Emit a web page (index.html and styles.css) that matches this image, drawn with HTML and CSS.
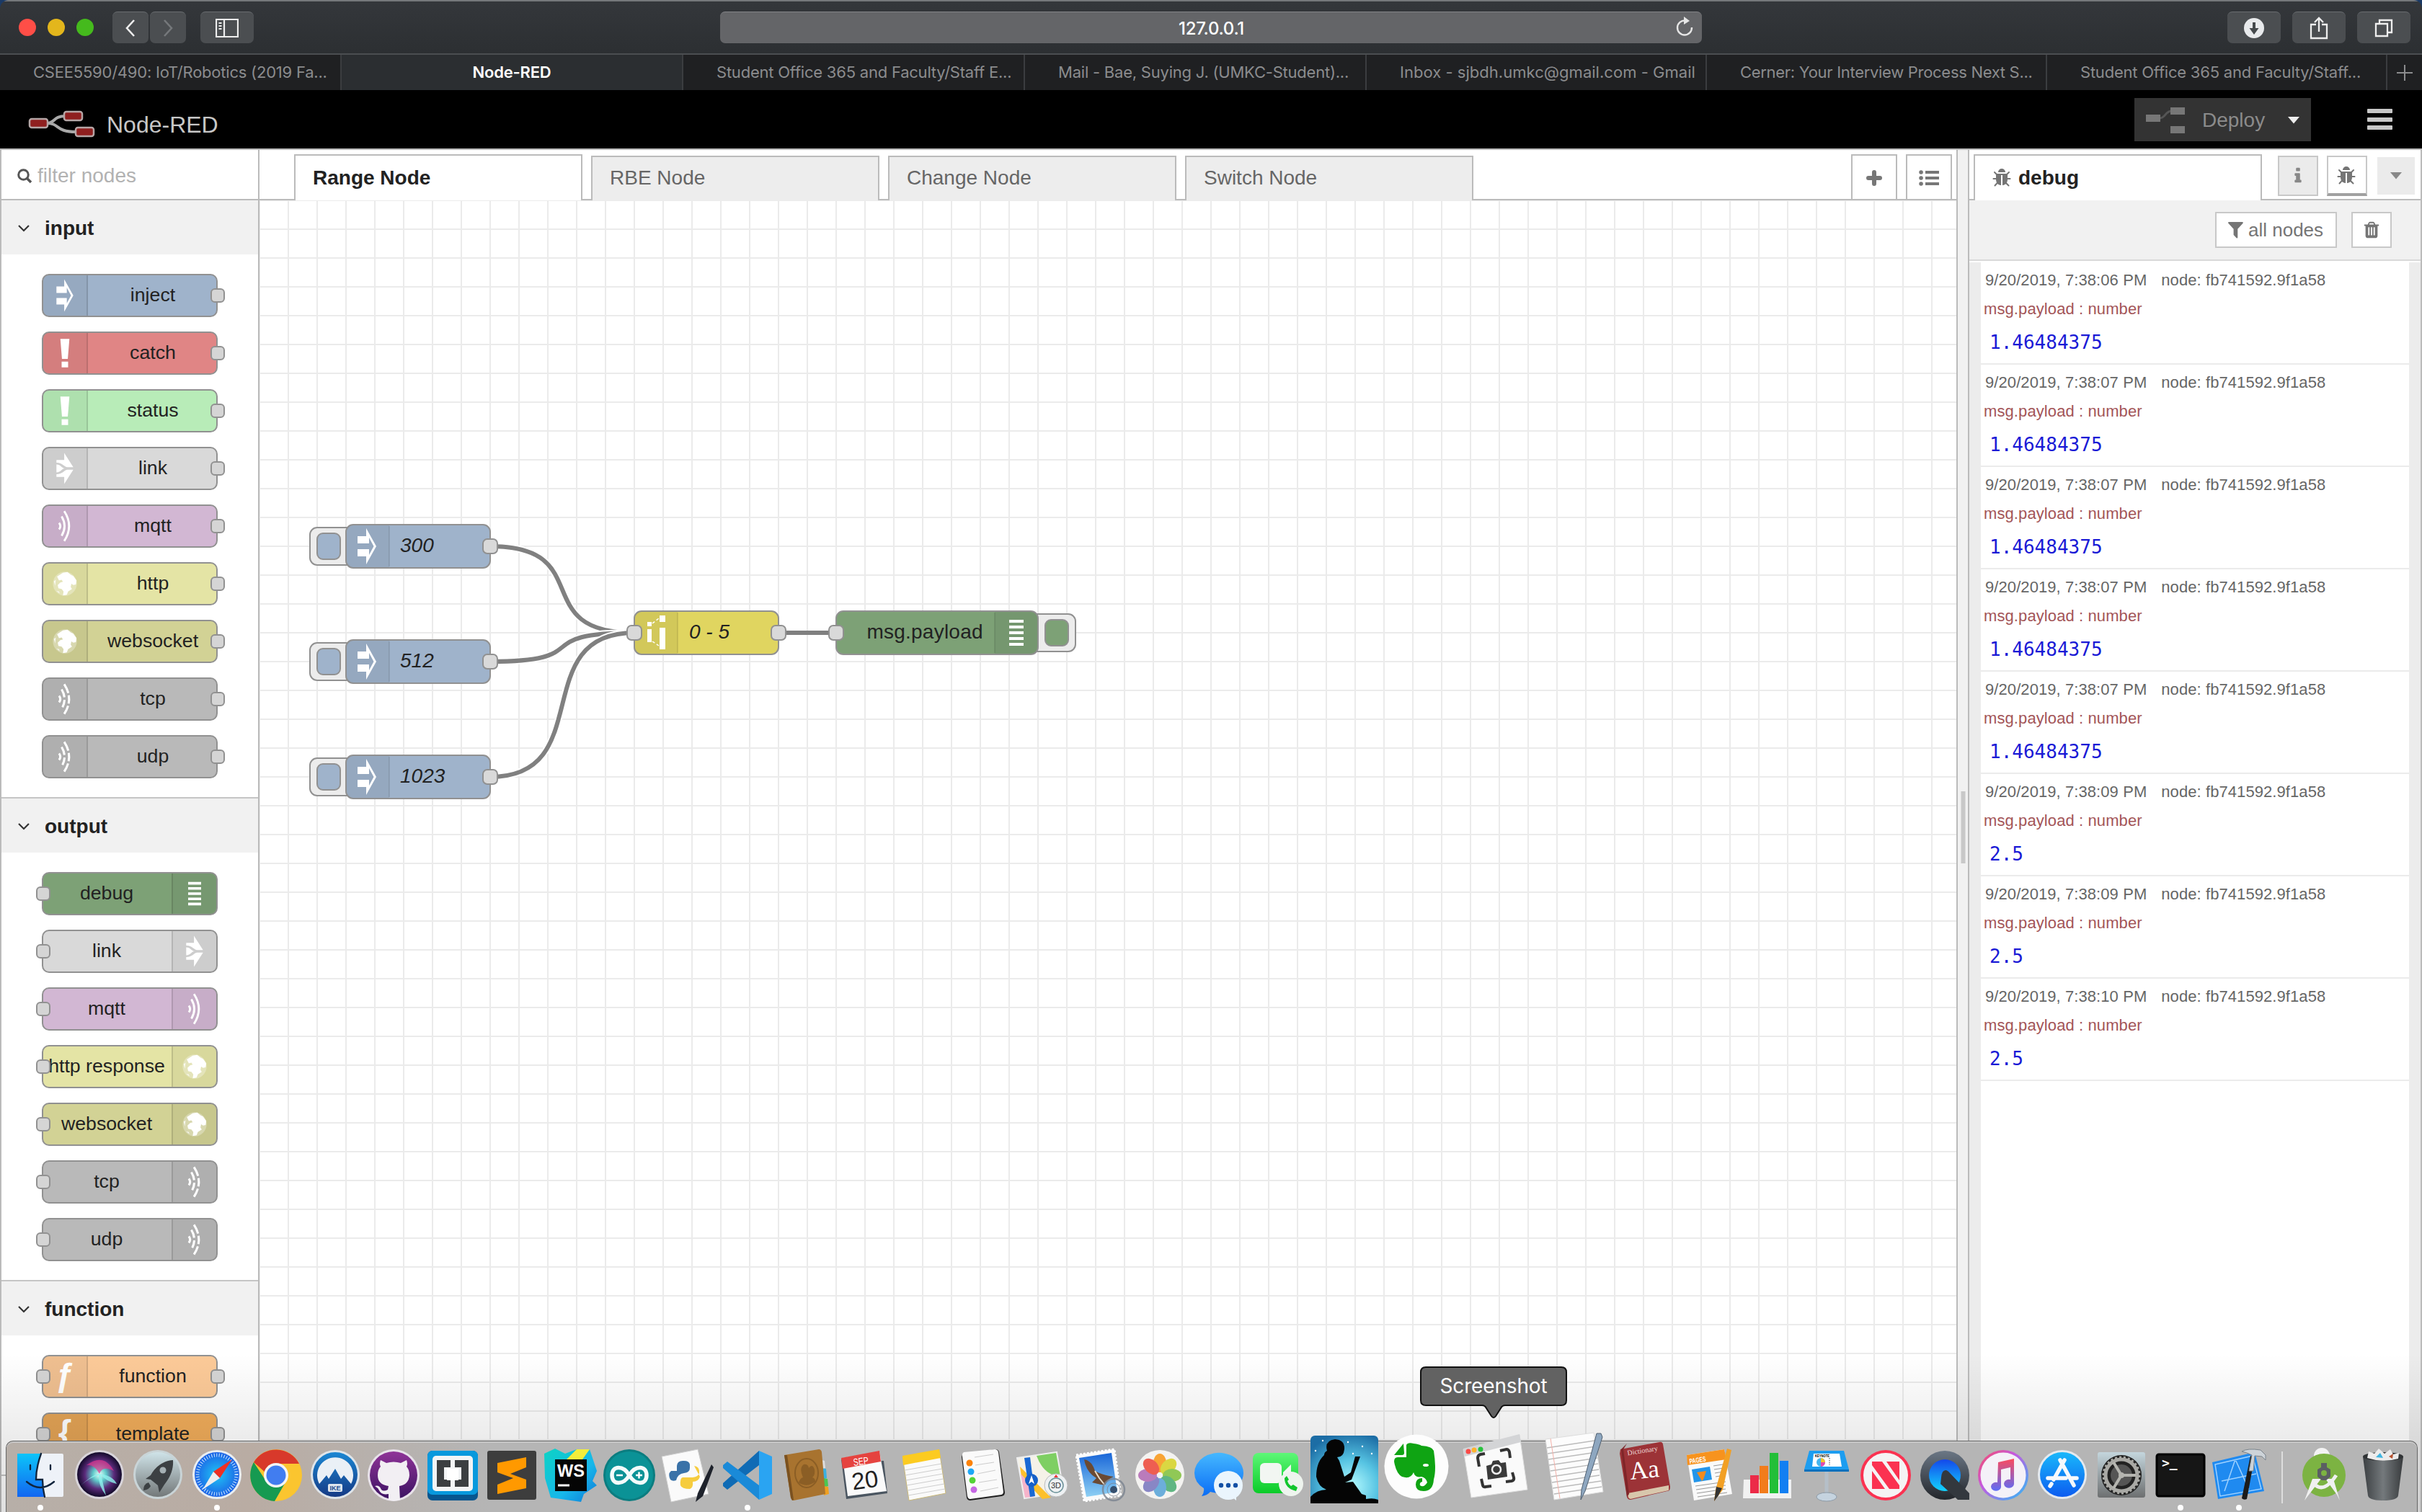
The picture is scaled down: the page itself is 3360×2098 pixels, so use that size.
FILE: index.html
```html
<!DOCTYPE html>
<html lang="en">
<head>
<meta charset="utf-8">
<title>Node-RED</title>
<link rel="stylesheet" href="styles.css">
</head>
<body>
<svg class="defs" width="0" height="0">
  <defs>
    <symbol id="i-inject" viewBox="-20 -30 40 60"><path fill="#fff" fill-rule="evenodd" d="M-13-14H-1V-25L13 0L-1 25V14H-13V4H3V12L9.500 0L3-12V-4H-13Z"/></symbol>
    <symbol id="i-bang" viewBox="-20 -30 40 60"><path fill="#fff" d="M-7-22H7L4.500 9H-4.500ZM-5 13H5V22H-5Z"/></symbol>
    <symbol id="i-link" viewBox="-20 -30 40 60"><path fill="#fff" d="M-13-13H-1V-24L13-2H4C-1-2-3-9-13-9ZM-13 13H-1V24L13 2H4C-1 2-3 9-13 9Z"/><path fill="#fff" d="M-13-6C-6-6-5 0 0 0C-5 0-6 6-13 6Z"/></symbol>
    <symbol id="i-mqtt" viewBox="-20 -30 40 60"><g fill="none" stroke="#fff" stroke-width="3.200"><path d="M-9-5Q-5 0-9 5M-5-15Q4 0-5 15M-1-23Q14 0-1 23"/></g></symbol>
    <symbol id="i-tcp" viewBox="-20 -30 40 60"><g fill="none" stroke="#fff" stroke-width="3.400"><path d="M-9-5Q-5 0-9 5"/><path stroke-dasharray="13 4 12 4" d="M-5-15Q4 0-5 15"/><path stroke-dasharray="15 3.500 13 3.500" d="M-1-23Q14 0-1 23"/></g></symbol>
    <symbol id="i-globe" viewBox="-20 -30 40 60"><circle r="18.500" fill="#fff" fill-opacity=".3"/><path fill="#fff" d="M-12-11L-3-17L4-18L9-14L13-12L18-5L17 1L13 2L10 0L9 5L11 8L5 12L3 17L-3 18L-2 12L-5 8L-10 7L-11 2L-7-2L-3-3L-5-6L-9-5Z"/><path fill="#fff" d="M-17-4L-14-6L-15 3ZM-13 11L-9 12L-8 15Z" fill-opacity=".8"/></symbol>
    <symbol id="i-debug" viewBox="-20 -30 40 60"><path fill="#fff" d="M-10-18H10V-14H-10ZM-10-10H10V-6H-10ZM-10-2H10V2H-10ZM-10 6H10V10H-10ZM-10 14H10V18H-10Z"/></symbol>
    <symbol id="i-range" viewBox="-20 -30 40 60"><path fill="#fff" d="M-12-15H-6V-9H-12ZM-12-5H-6V13H-12ZM5-24H13V-15H5ZM5-7H13V23H5Z"/><path stroke="#fff" stroke-width="1.500" stroke-dasharray="4 3" d="M-5-13L4-20M-5 12L4 18"/></symbol>
    <symbol id="i-bug" viewBox="0 0 1792 1792"><path fill="currentColor" d="M1632 960q0 26-19 45t-45 19h-224q0 171-67 290l208 209q19 19 19 45t-19 45q-18 19-45 19t-45-19l-198-197q-5 5-15 13t-42 28.500-65 36.500-82 29-97 13v-896h-128v896q-51 0-101.500-13.500t-87-33-66-39-43.500-32.500l-15-14-183 207q-20 21-48 21-24 0-43-16-19-18-20.500-44.500t15.500-46.500l202-227q-58-114-58-274h-224q-26 0-45-19t-19-45 19-45 45-19h224v-294l-173-173q-19-19-19-45t19-45 45-19 45 19l173 173h844l173-173q19-19 45-19t45 19 19 45-19 45l-173 173v294h224q26 0 45 19t19 45zm-480-576h-640q0-133 93.500-226.500t226.500-93.500 226.500 93.500 93.500 226.500z"/></symbol>
  </defs>
</svg>

<div class="window">
  <div class="toolbar">
    <div class="lights"><i class="red"></i><i class="yellow"></i><i class="green"></i></div>
    <div class="btn-pair">
      <span class="tbtn back"><svg width="16" height="26"><path d="M13 2L3 13L13 24" fill="none" stroke="#eee" stroke-width="2.600"/></svg></span>
      <span class="tbtn back"><svg width="16" height="26"><path d="M3 2L13 13L3 24" fill="none" stroke="#75787b" stroke-width="2.600"/></svg></span>
    </div>
    <span class="tbtn"><svg width="32" height="26"><path d="M1 1H31V25H1ZM12 1V25M4.500 6H8.500M4.500 10H8.500M4.500 14H8.500" fill="none" stroke="#eee" stroke-width="2.200"/></svg></span>
    <div class="address"><span class="url">127.0.0.1</span>
      <svg class="reload" width="26" height="28" viewBox="0 0 26 28"><path d="M14 5.500A10 10 0 1 0 23 15" fill="none" stroke="#e6e6e6" stroke-width="2.400"/><path d="M12 0L20 6L12 11Z" fill="#e6e6e6"/></svg>
    </div>
    <div class="actions">
      <span class="tbtn"><svg width="28" height="28"><circle cx="14" cy="14" r="14" fill="#e8eaec"/><path d="M14 6V15" stroke="#45494c" stroke-width="4"/><path d="M7.500 14H20.500L14 23Z" fill="#45494c"/></svg></span>
      <span class="tbtn"><svg width="26" height="32"><path d="M9 11H2V30H24V11H17M13 21V2M7 8L13 2L19 8" fill="none" stroke="#eee" stroke-width="2.300"/></svg></span>
      <span class="tbtn"><svg width="26" height="26"><path d="M2 7H18V24H2ZM7 7V2H24V19H18" fill="none" stroke="#eee" stroke-width="2.300"/></svg></span>
    </div>
  </div>
  <div class="tabs">
    <span class="tab">CSEE5590/490: IoT/Robotics (2019 Fa...</span>
    <span class="tab current">Node-RED</span>
    <span class="tab">Student Office 365 and Faculty/Staff E...</span>
    <span class="tab">Mail - Bae, Suying J. (UMKC-Student)...</span>
    <span class="tab loose">Inbox - sjbdh.umkc@gmail.com - Gmail</span>
    <span class="tab tight">Cerner: Your Interview Process Next S...</span>
    <span class="tab">Student Office 365 and Faculty/Staff...</span>
    <span class="newtab"><svg width="24" height="24"><path d="M12 1V23M1 12H23" stroke="#8b8c8e" stroke-width="2"/></svg></span>
  </div>

  <header class="header">
    <svg class="logo" width="94" height="38" viewBox="0 0 94 38"><path d="M26 18C38 18 34 8 52 8M26 18C44 18 38 30 66 30" fill="none" stroke="#a9a9a9" stroke-width="4"/><g fill="#8f1f1f" stroke="#b5a5a5" stroke-width="2.500"><rect x="2" y="12" width="25" height="12" rx="3"/><rect x="50" y="2" width="25" height="12" rx="3"/><rect x="66" y="24" width="25" height="12" rx="3"/></g></svg>
    <span class="brand">Node-RED</span>
    <div class="deploy">
      <svg width="54" height="38" viewBox="0 0 54 38"><path d="M19 16C28 16 26 6 36 6" fill="none" stroke="#555" stroke-width="3"/><path fill="#777" d="M0 11H20V21H0ZM34 1H54V11H34ZM34 27H54V37H34Z"/></svg>
      <span class="deploy-label">Deploy</span>
      <svg width="16" height="10"><path d="M0 0H16L8 9.500Z" fill="#eee"/></svg>
    </div>
    <div class="burger"><i></i><i></i><i></i></div>
  </header>

  <main class="main">
    <aside class="palette">
      <div class="search"><svg width="21" height="21"><circle cx="8.500" cy="8.500" r="6.800" fill="none" stroke="#555" stroke-width="3"/><path d="M13.500 13.500L19 19" stroke="#555" stroke-width="3.500"/></svg><span>filter nodes</span></div>
      <section class="category">
        <h3><svg width="18" height="12"><path d="M2 2L9 9L16 2" fill="none" stroke="#333" stroke-width="2.200"/></svg>input</h3>
        <div class="nodes">
          <div class="node inject"><svg class="icon"><use href="#i-inject"/></svg><span>inject</span><i class="port out"></i></div>
          <div class="node catch"><svg class="icon"><use href="#i-bang"/></svg><span>catch</span><i class="port out"></i></div>
          <div class="node status"><svg class="icon"><use href="#i-bang"/></svg><span>status</span><i class="port out"></i></div>
          <div class="node link"><svg class="icon"><use href="#i-link"/></svg><span>link</span><i class="port out"></i></div>
          <div class="node mqtt"><svg class="icon"><use href="#i-mqtt"/></svg><span>mqtt</span><i class="port out"></i></div>
          <div class="node http"><svg class="icon"><use href="#i-globe"/></svg><span>http</span><i class="port out"></i></div>
          <div class="node websocket"><svg class="icon"><use href="#i-globe"/></svg><span>websocket</span><i class="port out"></i></div>
          <div class="node net"><svg class="icon"><use href="#i-tcp"/></svg><span>tcp</span><i class="port out"></i></div>
          <div class="node net"><svg class="icon"><use href="#i-tcp"/></svg><span>udp</span><i class="port out"></i></div>
        </div>
      </section>
      <section class="category">
        <h3><svg width="18" height="12"><path d="M2 2L9 9L16 2" fill="none" stroke="#333" stroke-width="2.200"/></svg>output</h3>
        <div class="nodes">
          <div class="node debug right"><svg class="icon"><use href="#i-debug"/></svg><span>debug</span><i class="port in"></i></div>
          <div class="node link right"><svg class="icon"><use href="#i-link"/></svg><span>link</span><i class="port in"></i></div>
          <div class="node mqtt right"><svg class="icon"><use href="#i-mqtt"/></svg><span>mqtt</span><i class="port in"></i></div>
          <div class="node http right"><svg class="icon"><use href="#i-globe"/></svg><span>http response</span><i class="port in"></i></div>
          <div class="node websocket right"><svg class="icon"><use href="#i-globe"/></svg><span>websocket</span><i class="port in"></i></div>
          <div class="node net right"><svg class="icon"><use href="#i-tcp"/></svg><span>tcp</span><i class="port in"></i></div>
          <div class="node net right"><svg class="icon"><use href="#i-tcp"/></svg><span>udp</span><i class="port in"></i></div>
        </div>
      </section>
      <section class="category">
        <h3><svg width="18" height="12"><path d="M2 2L9 9L16 2" fill="none" stroke="#333" stroke-width="2.200"/></svg>function</h3>
        <div class="nodes">
          <div class="node func"><b class="icon glyph fn">ƒ</b><span>function</span><i class="port in"></i><i class="port out"></i></div>
          <div class="node template"><b class="icon glyph">{</b><span>template</span><i class="port in"></i><i class="port out"></i></div>
        </div>
      </section>
    </aside>

    <section class="workspace">
      <div class="flow-tabs">
        <span class="ftab active">Range Node</span><span class="ftab">RBE Node</span><span class="ftab">Change Node</span><span class="ftab">Switch Node</span>
        <span class="fbtn first"><svg width="24" height="24"><path d="M12 4V20M4 12H20" stroke="#777" stroke-width="6" stroke-linecap="round"/></svg></span>
        <span class="fbtn"><svg width="28" height="24"><path d="M9 4H28M9 12H28M9 20H28" stroke="#777" stroke-width="4"/><path d="M3 4H3.100M3 12H3.100M3 20H3.100" stroke="#777" stroke-width="5.500" stroke-linecap="round"/></svg></span>
      </div>
      <svg class="canvas" width="2354" height="1820" viewBox="360 278 2354 1820">
        <g fill="none" class="wires">
          <path class="halo" d="M680 758C830 758 730 878 880 878"/><path d="M680 758C830 758 730 878 880 878"/>
          <path class="halo" d="M680 918C830 918 730 878 880 878"/><path d="M680 918C830 918 730 878 880 878"/>
          <path class="halo" d="M680 1078C830 1078 730 878 880 878"/><path d="M680 1078C830 1078 730 878 880 878"/>
          <path d="M1080 878H1160"/>
        </g>
        <g class="flow-node">
          <rect class="tray" x="430" y="732" width="64" height="52" rx="10"/><rect class="blue" x="440" y="740" width="32" height="36" rx="8"/>
          <rect class="blue" x="480" y="728" width="200" height="60" rx="10"/><path class="shade" d="M490 729H540V787H490Q481 787 481 777V739Q481 729 490 729Z"/><path class="rule" d="M540 730V786"/>
          <use href="#i-inject" x="489" y="728" width="40" height="60"/><rect class="plug" x="670" y="748" width="20" height="20" rx="6"/>
          <text class="it" x="555" y="766">300</text>
        </g>
        <g class="flow-node" transform="translate(0 160)">
          <rect class="tray" x="430" y="732" width="64" height="52" rx="10"/><rect class="blue" x="440" y="740" width="32" height="36" rx="8"/>
          <rect class="blue" x="480" y="728" width="200" height="60" rx="10"/><path class="shade" d="M490 729H540V787H490Q481 787 481 777V739Q481 729 490 729Z"/><path class="rule" d="M540 730V786"/>
          <use href="#i-inject" x="489" y="728" width="40" height="60"/><rect class="plug" x="670" y="748" width="20" height="20" rx="6"/>
          <text class="it" x="555" y="766">512</text>
        </g>
        <g class="flow-node" transform="translate(0 320)">
          <rect class="tray" x="430" y="732" width="64" height="52" rx="10"/><rect class="blue" x="440" y="740" width="32" height="36" rx="8"/>
          <rect class="blue" x="480" y="728" width="200" height="60" rx="10"/><path class="shade" d="M490 729H540V787H490Q481 787 481 777V739Q481 729 490 729Z"/><path class="rule" d="M540 730V786"/>
          <use href="#i-inject" x="489" y="728" width="40" height="60"/><rect class="plug" x="670" y="748" width="20" height="20" rx="6"/>
          <text class="it" x="555" y="766">1023</text>
        </g>
        <g class="flow-node">
          <rect class="yellow" x="880" y="848" width="200" height="60" rx="10"/><path class="shade" d="M890 849H940V907H890Q881 907 881 897V859Q881 849 890 849Z"/><path class="rule" d="M940 850V906"/>
          <use href="#i-range" x="890" y="848" width="40" height="60"/>
          <rect class="plug" x="870" y="868" width="20" height="20" rx="6"/><rect class="plug" x="1070" y="868" width="20" height="20" rx="6"/>
          <text class="it" x="956" y="886">0 - 5</text>
        </g>
        <g class="flow-node">
          <rect class="tray" x="1428" y="852" width="64" height="52" rx="10"/><rect class="green" x="1450" y="860" width="32" height="36" rx="8"/>
          <rect class="green" x="1160" y="848" width="280" height="60" rx="10"/><path class="shade" d="M1430 849H1380V907H1430Q1439 907 1439 897V859Q1439 849 1430 849Z"/><path class="rule" d="M1380 850V906"/>
          <use href="#i-debug" x="1390" y="848" width="40" height="60"/>
          <rect class="plug" x="1150" y="868" width="20" height="20" rx="6"/>
          <text x="1202.500" y="886" textLength="161" lengthAdjust="spacing">msg.payload</text>
        </g>
      </svg>
    </section>

    <div class="separator"><i></i></div>

    <aside class="sidebar">
      <div class="side-tabs">
        <span class="ftab active"><svg width="28" height="28"><use href="#i-bug"/></svg>debug</span>
        <span class="sbtn grey"><svg width="26" height="26" viewBox="0 0 1792 1792"><path fill="currentColor" d="M1216 1344v128q0 26-19 45t-45 19h-512q-26 0-45-19t-19-45v-128q0-26 19-45t45-19h64v-384h-64q-26 0-45-19t-19-45v-128q0-26 19-45t45-19h384q26 0 45 19t19 45v576h64q26 0 45 19t19 45zm-128-1152v192q0 26-19 45t-45 19h-256q-26 0-45-19t-19-45v-192q0-26 19-45t45-19h256q26 0 45 19t19 45z"/></svg></span>
        <span class="sbtn selected"><svg width="28" height="28"><use href="#i-bug"/></svg></span>
        <span class="sbtn drop"><svg width="16" height="10"><path d="M0 0H16L8 9.500Z" fill="#888"/></svg></span>
      </div>
      <div class="side-tools">
        <span class="tool"><svg width="21" height="24" viewBox="190 190 1420 1500" preserveAspectRatio="none"><path fill="currentColor" d="M1595 295q17 41-14 70l-493 493v742q0 42-39 59-13 5-25 5-27 0-45-19l-256-256q-19-19-19-45v-486l-493-493q-31-29-14-70 17-39 59-39h1280q42 0 59 39z"/></svg>all nodes</span>
        <span class="tool bin"><svg width="26" height="26" viewBox="0 0 1792 1792"><path fill="currentColor" d="M704 1376v-704q0-14-9-23t-23-9h-64q-14 0-23 9t-9 23v704q0 14 9 23t23 9h64q14 0 23-9t9-23zm256 0v-704q0-14-9-23t-23-9h-64q-14 0-23 9t-9 23v704q0 14 9 23t23 9h64q14 0 23-9t9-23zm256 0v-704q0-14-9-23t-23-9h-64q-14 0-23 9t-9 23v704q0 14 9 23t23 9h64q14 0 23-9t9-23zm-544-992h448l-48-117q-7-9-17-11h-317q-10 2-17 11zm928 32v64q0 14-9 23t-23 9h-96v948q0 83-47 143.500t-113 60.500h-832q-66 0-113-58.500t-47-141.500v-952h-96q-14 0-23-9t-9-23v-64q0-14 9-23t23-9h309l70-167q15-37 54-63t79-26h320q40 0 79 26t54 63l70 167h309q14 0 23 9t9 23z"/></svg></span>
      </div>
      <div class="log">
        <div class="msg"><p class="meta"><span>9/20/2019, 7:38:06 PM</span><span>node: fb741592.9f1a58</span></p><p class="topic">msg.payload : number</p><p class="value">1.46484375</p></div>
        <div class="msg"><p class="meta"><span>9/20/2019, 7:38:07 PM</span><span>node: fb741592.9f1a58</span></p><p class="topic">msg.payload : number</p><p class="value">1.46484375</p></div>
        <div class="msg"><p class="meta"><span>9/20/2019, 7:38:07 PM</span><span>node: fb741592.9f1a58</span></p><p class="topic">msg.payload : number</p><p class="value">1.46484375</p></div>
        <div class="msg"><p class="meta"><span>9/20/2019, 7:38:07 PM</span><span>node: fb741592.9f1a58</span></p><p class="topic">msg.payload : number</p><p class="value">1.46484375</p></div>
        <div class="msg"><p class="meta"><span>9/20/2019, 7:38:07 PM</span><span>node: fb741592.9f1a58</span></p><p class="topic">msg.payload : number</p><p class="value">1.46484375</p></div>
        <div class="msg"><p class="meta"><span>9/20/2019, 7:38:09 PM</span><span>node: fb741592.9f1a58</span></p><p class="topic">msg.payload : number</p><p class="value">2.5</p></div>
        <div class="msg"><p class="meta"><span>9/20/2019, 7:38:09 PM</span><span>node: fb741592.9f1a58</span></p><p class="topic">msg.payload : number</p><p class="value">2.5</p></div>
        <div class="msg"><p class="meta"><span>9/20/2019, 7:38:10 PM</span><span>node: fb741592.9f1a58</span></p><p class="topic">msg.payload : number</p><p class="value">2.5</p></div>
      </div>
    </aside>
  </main>
</div>

<div class="dock-shadow"></div>
<div class="dock">
  <svg width="0" height="0" class="defs"><defs>
    <linearGradient id="g-finder" x2="0" y2="1"><stop stop-color="#0cc4f9"/><stop offset="1" stop-color="#1266f1"/></linearGradient>
    <radialGradient id="g-siri"><stop stop-color="#e8fff8"/><stop offset=".3" stop-color="#5fc9c9"/><stop offset=".65" stop-color="#5a2a7a"/><stop offset="1" stop-color="#120a2a"/></radialGradient>
    <linearGradient id="g-rocket" x2="0" y2="1"><stop stop-color="#cfe3e8"/><stop offset="1" stop-color="#737879"/></linearGradient>
    <radialGradient id="g-safari"><stop stop-color="#1fc6f5"/><stop offset="1" stop-color="#1c63e6"/></radialGradient>
    <linearGradient id="g-nord" x2="0" y2="1"><stop stop-color="#1b87d3"/><stop offset="1" stop-color="#153a85"/></linearGradient>
    <linearGradient id="g-git" x2="0" y2="1"><stop stop-color="#8f3398"/><stop offset="1" stop-color="#3d1363"/></linearGradient>
    <linearGradient id="g-mail" x2="0" y2="1"><stop stop-color="#1966d8"/><stop offset="1" stop-color="#8ed0f4"/></linearGradient>
    <linearGradient id="g-msg" x2="0" y2="1"><stop stop-color="#45b8ff"/><stop offset="1" stop-color="#0b6df5"/></linearGradient>
    <linearGradient id="g-ft" x2="0" y2="1"><stop stop-color="#5df777"/><stop offset="1" stop-color="#0acb28"/></linearGradient>
    <radialGradient id="g-kindle" cx=".6" cy=".75" r=".8"><stop stop-color="#b5fbff"/><stop offset=".5" stop-color="#56c3e2"/><stop offset="1" stop-color="#1c6da5"/></radialGradient>
    <linearGradient id="g-qt" x2="0" y2="1"><stop stop-color="#6b7785"/><stop offset="1" stop-color="#23262b"/></linearGradient>
    <linearGradient id="g-qti" x2="0" y2="1"><stop stop-color="#1447ea"/><stop offset="1" stop-color="#12d4ff"/></linearGradient>
    <linearGradient id="g-it" x1="0" x2="1" y2="1"><stop stop-color="#fb4a5e"/><stop offset=".4" stop-color="#c45ae0"/><stop offset="1" stop-color="#27c0f7"/></linearGradient>
    <linearGradient id="g-note" x2="0" y2="1"><stop stop-color="#fb4a5e"/><stop offset="1" stop-color="#5d6cf7"/></linearGradient>
    <linearGradient id="g-as" x2="0" y2="1"><stop stop-color="#19b8fb"/><stop offset="1" stop-color="#0c5cf0"/></linearGradient>
    <linearGradient id="g-bin" x2="1" y2="0"><stop stop-color="#3b3f42"/><stop offset=".5" stop-color="#74797c"/><stop offset="1" stop-color="#383b3d"/></linearGradient>
    <linearGradient id="g-pref" x2="0" y2="1"><stop stop-color="#c4d6dd"/><stop offset="1" stop-color="#6d6f70"/></linearGradient>
    <linearGradient id="g-ws" x2="1" y2="1"><stop stop-color="#0cd3c4"/><stop offset=".6" stop-color="#17b7ea"/><stop offset="1" stop-color="#0d78d8"/></linearGradient>
  </defs></svg>

  <div class="slot running"><svg viewBox="-40 -47 80 98"><rect x="-32" y="-30" width="64" height="60" rx="2" fill="#eef2f8"/><path d="M-32-30H1C-4-16-6-4-6 6H3C3 14 4 22 6 30H-32Z" fill="url(#g-finder)"/><path d="M1-30C-4-16-6-4-6 6H3C3 14 4 22 6 30M-14-14V-8M14-14V-8M-19 9Q0 25 19 9" fill="none" stroke="#10243c" stroke-width="2.300" stroke-linecap="round"/></svg></div>
  <div class="slot"><svg viewBox="-40 -47 80 98"><circle r="34" cy="-1" fill="#d8d4da"/><circle r="31" cy="-1" fill="url(#g-siri)"/><path d="M-18-14Q6-32 20-6Q4-14 0-2Q-8-16-18-14Z" fill="#e2358f" opacity=".7"/><path d="M-26 14Q-8-2 0-2Q18 0 24 12Q8 8 2-1Q6 16 9 28Q-2 14-1 0Q-12 2-26 14Z" fill="#8ff2ee" opacity=".8"/></svg></div>
  <div class="slot"><svg viewBox="-40 -47 80 98"><circle r="34" cy="-1" fill="#c9d4d7"/><circle r="31" cy="-1" fill="url(#g-rocket)"/><path d="M21-21C6-20-5-10-10 0L-17 5L-10 6L0 14L2 24L9 13C17 3 22-8 21-21Z" fill="#3c4043"/><circle cx="7" cy="-7" r="4.500" fill="#a5b0b4"/><path d="M-13 10Q-20 12-20 21Q-12 20-10 15Z" fill="#3c4043"/></svg></div>
  <div class="slot running"><svg viewBox="-40 -47 80 98"><circle r="34" cy="-1" fill="#e9eef2"/><circle r="31" cy="-1" fill="url(#g-safari)"/><circle r="27" cy="-1" fill="none" stroke="#cfe8ff" stroke-width="5" stroke-dasharray="1 2.500"/><path d="M21-22L4 4L-5-5Z" fill="#ee3024"/><path d="M-20 20L-5-5L4 4Z" fill="#eee"/></svg></div>
  <div class="slot"><svg viewBox="-40 -47 80 98"><circle r="36" fill="#fbc52f"/><path d="M-31-18A36 36 0 0 1 32-16H0A16 16 0 0 0-15-4Z" fill="#d8392b"/><path d="M-31-18A36 36 0 0 0-2 36L14 8A16 16 0 0 1-14 8Z" fill="#169a51"/><circle r="17" fill="#f4f4f4"/><circle r="13.500" fill="#417df0"/></svg></div>
  <div class="slot"><svg viewBox="-40 -47 80 98"><circle r="34" cy="-1" fill="#dfe5ea"/><circle r="31" cy="-1" fill="url(#g-nord)"/><path d="M-22 12A25 25 0 1 1 22 12L12 0L8 5L0-9L-9 5L-12 0Z" fill="#eaf0f6"/><rect x="-10" y="12" width="20" height="11" rx="2" fill="#dfe6ee"/><text y="21" text-anchor="middle" font-size="9" font-weight="700" fill="#1d4b8f">IKE</text></svg></div>
  <div class="slot"><svg viewBox="-40 -47 80 98"><circle r="36" fill="#e8e2ea"/><circle r="33" fill="url(#g-git)"/><path d="M-18-21L-10-17Q0-20 10-17L18-21Q20-16 18-12Q22-8 22 0Q21 13 8 15L9 34Q0 37-7 34V26Q-17 28-20 21Q-22 17-26 15Q-20 13-17 20Q-14 23-8 20L-7 15Q-22 13-22 0Q-22-8-18-12Q-20-16-18-21Z" fill="#f2eff3"/></svg></div>
  <div class="slot"><svg viewBox="-40 -47 80 98"><rect x="-35" y="-34" width="70" height="69" rx="7" fill="#07568f"/><rect x="-35" y="-34" width="70" height="61" rx="7" fill="#0899dd"/><rect x="-28" y="-27" width="56" height="49" rx="5" fill="#f3f5f6"/><path d="M-22-21H-3V-11H-12V6H-3V16H-22ZM22-21H3V-11H12V6H3V16H22Z" fill="#3c3f41"/><rect x="-8" y="-9" width="16" height="16" fill="#fff"/></svg></div>
  <div class="slot"><svg viewBox="-40 -47 80 98"><rect x="-34" y="-34" width="68" height="68" rx="3" fill="#3d3d3d"/><path d="M20-25V-11L-2-2L20 6V18L-20 26V13L2 4L-20-4V-17Z" fill="#f90"/></svg></div>
  <div class="slot"><svg viewBox="-40 -47 80 98"><path d="M-37-30L-22-37L-8-30L8-36L26-36L36-6L30 8L36 14L18 26L14 37L-28 31L-36 4Z" fill="url(#g-ws)"/><path d="M8-36L26-36L16-22L-6-22Z" fill="#f3ee3a"/><rect x="-22" y="-22" width="44" height="44" fill="#050505"/><text x="-19" y="2" font-size="23" font-weight="700" fill="#fff" textLength="38" lengthAdjust="spacingAndGlyphs">WS</text><path d="M-18 14H-2" stroke="#fff" stroke-width="3"/></svg></div>
  <div class="slot"><svg viewBox="-40 -47 80 98"><circle r="36" fill="#0b7d80"/><circle r="33" fill="#0b9296"/><g fill="none" stroke="#f3fbfb" stroke-width="5.500"><path d="M0 0C-8-14-24-14-24 0S-8 14 0 0S24-14 24 0S8 14 0 0Z"/></g><path d="M-18 0H-9M9 0H18M13.500-4.500V4.500" stroke="#fff" stroke-width="2.500"/></svg></div>
  <div class="slot"><svg viewBox="-40 -47 80 98"><path d="M-37-26L13-36L28 26L-24 37Z" fill="#fafafa" stroke="#ccc"/><path d="M-6-20Q-16-21-16-12V-6H-24Q-29-2-25 6Q-22 9-17 7Q-15-2-6-3Q2-4 2-10V-15Q1-20-6-20Z" fill="#3a72a8"/><path d="M8-13Q16-12 15-3Q14 2 6 3H-8Q-12 4-11 14Q-9 19 2 19Q7 17 6 9Q14 9 16 2Z" fill="#f6cc3e"/><path d="M32-15L13 25L10 37L20 29L35-11Z" fill="#1e222b"/></svg></div>
  <div class="slot running"><svg viewBox="-40 -47 80 98"><path d="M16-34L34-26V26L16 34Z" fill="#2aa4f2"/><path d="M16-34V-14L-28 20L-34 15V11Z" fill="#0f6bb5"/><path d="M16 34V14L-28-19L-34-14V-10Z" fill="#1a8ad8"/></svg></div>
  <div class="slot"><svg viewBox="-40 -47 80 98"><path d="M18-22L25-20L26-10L20-8Z" fill="#ddd"/><path d="M20-10L27-9L28 4L22 6Z" fill="#3bb0e0"/><path d="M22 4L29 5L30 15L23 17Z" fill="#4cc552"/><path d="M23 15L30 16L31 26L24 28Z" fill="#f0a020"/><path d="M-31-28L17-36Q20-36 21-32L26 26L-18 35Q-21 35-22 31Z" fill="#a8732f"/><path d="M-31-28L-22 31L-20 35L-18 34L-27-28Z" fill="#7a5120"/><ellipse cy="-3" rx="16" ry="20" fill="none" stroke="#8b5e25" stroke-width="2"/><path d="M-11 10Q-9 4-5 3Q-11-10-4-15Q2-16 3-10Q8-17 11-8Q12 0 8 3Q12 4 12 9Q0 18-11 10Z" fill="#8b5e25"/></svg></div>
  <div class="slot"><svg viewBox="-40 -47 80 98"><path d="M-33-22L-26 33L31 25L26-20Z" fill="#4a5560"/><path d="M-31-24L20-33L30 22L-24 29Z" fill="#fafafa"/><path d="M-33-24L20-34L22-19L-31-9Z" fill="#e5433f"/><text transform="rotate(-8)" x="-3" y="-15" text-anchor="middle" font-size="14" fill="#fff" textLength="21" lengthAdjust="spacingAndGlyphs">SEP</text><text transform="rotate(-8)" x="-1" y="18" text-anchor="middle" font-size="33" fill="#222">20</text></svg></div>
  <div class="slot"><svg viewBox="-40 -47 80 98"><path d="M-30-26L21-35L30 25L-21 35Z" fill="#fafafa" stroke="#c9b878"/><path d="M-30-27L21-36L23-24L-29-14Z" fill="#fccb20"/><path d="M-27-7L24-16M-26 0L25-9M-25 7L26-2M-24 14L27 5M-23 21L28 12M-22 28L29 19" stroke="#ccc"/></svg></div>
  <div class="slot"><svg viewBox="-40 -47 80 98"><path d="M-27-30L17-36Q21-36 22-32L30 24Q30 28 26 29L-18 35Q-22 35-23 31L-30-25Q-30-29-27-30Z" fill="#222"/><path d="M-27-32L16-36Q20-36 21-32L28 23Q28 26 25 27L-18 33Q-21 33-22 29L-29-26Q-30-30-27-32Z" fill="#fafafa"/><path d="M-12-25L14-29M-11-14L15-18M-8-2L17-7M-6 10L19 6M-4 22L21 17" stroke="#ccc"/><circle cx="-19" cy="-17" r="4.500" fill="#fd8208"/><circle cx="-17" cy="-5" r="4.500" fill="#1ba7f7"/><circle cx="-15" cy="7" r="4.500" fill="#53d337"/><circle cx="-13" cy="20" r="4.500" fill="#c667e4"/></svg></div>
  <div class="slot"><svg viewBox="-40 -47 80 98"><path d="M-35-24L20-32L30 24L-25 32Z" fill="#f5f2e8" stroke="#eee" stroke-width="2"/><path d="M-8-27L19-31L25 2Q2 0-8-27Z" fill="#7ecf63"/><path d="M-31-12L12 31L0 33L-29 2Z" fill="#fcc02d"/><path d="M-30-2L-15 14L-12 30L-24 31Z" fill="#f5b3ca"/><path d="M-25-24L-17-25L-10 29L-17 30Z" fill="#1a69d4"/><circle cx="-15" cy="7" r="9" fill="#1560c8"/><path d="M-15 0L-11 12L-15 9L-19 12Z" fill="#fff"/><circle cx="19" cy="14" r="16" fill="#eef1f3" stroke="#bbb"/><circle cx="19" cy="14" r="10" fill="none" stroke="#6b9299" stroke-width="1.500"/><path d="M19-1L22 3H16Z" fill="#e33"/><text x="19" y="18" text-anchor="middle" font-size="11" fill="#333">3D</text></svg></div>
  <div class="slot"><svg viewBox="-40 -47 80 98"><path d="M-34-28L19-36L28 28L-23 36Z" fill="#fafafa" stroke="#fff" stroke-width="3" stroke-dasharray="3 2"/><path d="M-30-24L15-31L23 23L-20 30Z" fill="url(#g-mail)"/><path d="M-23-22Q-12-20-8-6Q2 0 18 2Q8 6 6 14L-4 12L-12 10L-6 4Q-20-4-23-22Z" fill="#6b4a33"/><path d="M-8-6L-2 4L6 14" stroke="#e8dcc8" stroke-width="2" fill="none"/><circle cx="18" cy="20" r="15" fill="none" stroke="#7b8390" stroke-width="2.500" opacity=".8"/><circle cx="18" cy="20" r="9" fill="none" stroke="#7b8390" opacity=".8"/><circle cx="18" cy="20" r="5" fill="#36506f"/></svg></div>
  <div class="slot"><svg viewBox="-40 -47 80 98"><circle r="34" cy="-1" fill="#f4f3f1"/><g opacity=".88"><ellipse cy="-17" rx="9" ry="13" fill="#f99a1c"/><ellipse cy="-17" rx="9" ry="13" fill="#d7d42a" transform="rotate(45)"/><ellipse cy="-17" rx="9" ry="13" fill="#83c341" transform="rotate(90)"/><ellipse cy="-17" rx="9" ry="13" fill="#4cae74" transform="rotate(135)"/><ellipse cy="-17" rx="9" ry="13" fill="#5aa5d8" transform="rotate(180)"/><ellipse cy="-17" rx="9" ry="13" fill="#7a78c0" transform="rotate(225)"/><ellipse cy="-17" rx="9" ry="13" fill="#b36bb4" transform="rotate(270)"/><ellipse cy="-17" rx="9" ry="13" fill="#ee4a3c" transform="rotate(315)"/></g></svg></div>
  <div class="slot"><svg viewBox="-40 -47 80 98"><path d="M-34-3A34 28 0 1 1 30 10Q10 30-12 23Q-16 28-24 29Q-20 24-21 18Q-34 10-34-3Z" fill="url(#g-msg)"/><circle cx="13" cy="14" r="20" fill="#eaf5fd"/><path d="M18 30L24 35V26Z" fill="#eaf5fd"/><g fill="#1350a5"><circle cx="3" cy="14" r="3.200"/><circle cx="13" cy="14" r="3.200"/><circle cx="23" cy="14" r="3.200"/></g></svg></div>
  <div class="slot"><svg viewBox="-40 -47 80 98"><rect x="-35" y="-31" width="63" height="56" rx="8" fill="url(#g-ft)"/><rect x="-25" y="-17" width="30" height="28" rx="6" fill="#f2f6f2"/><path d="M7-4L18-15V8L7 2Z" fill="#f2f6f2"/><circle cx="18" cy="12" r="17" fill="#eef4ee"/><path d="M9 4Q9 18 25 22L27 17L21 13L18 15Q14 12 13 8L15 6L12 1Z" fill="#12c62d"/></svg></div>
  <div class="slot kindle"><svg viewBox="-40 -47 80 98"><rect x="-47" y="-55" width="94" height="94" rx="6" fill="url(#g-kindle)"/><g fill="#fff"><circle cx="-30" cy="-48" r="1.200"/><circle cx="-40" cy="-34" r="1.200"/><circle cx="5" cy="-46" r="1.200"/><circle cx="25" cy="-40" r="1.200"/><circle cx="38" cy="-30" r="1.200"/><circle cx="12" cy="-30" r="1.200"/></g><path d="M-47 30Q-38 20-25 20Q-36 16-39 2Q-39-18-28-28Q-28-32-24-34Q-28-48-13-50Q1-49 0-36Q-1-25-10-25L-7-20L0 2L9-4L15-26H22L10 6L1 10L12 9L24 26L30 28V33Q40 31 47 34V39H-47Z" fill="#050505"/></svg></div>
  <div class="slot evernote"><svg viewBox="-40 -47 80 98"><circle r="44.500" cy="-12" fill="#fdfdfd"/><path d="M-14-42Q-12-46-4-44Q4-43 7-41Q22-40 24-34Q28-8 24 6Q23 22 10 22Q-1 22-1 13Q-1 4 8 4V9Q4 10 5 14Q10 18 15 10Q13 3 7 2Q-2 4-4-4Q-8 6-20 2Q-28-2-31-19Q-31-25-26-25H-14Z" fill="#0fa413"/><path d="M-18-44L-31-28H-20Q-17-28-17-31Z" fill="#0fa413"/><ellipse cx="13" cy="-14" rx="4" ry="2" fill="#fff"/></svg></div>
  <div class="slot shot"><svg viewBox="-40 -47 80 98"><path d="M-45-36L33-56L44 20L-34 31Z" fill="#fafafa" stroke="#ddd"/><path d="M-45-37L33-57L35-46L-43-26Z" fill="#d3d4d6"/><circle cx="-38" cy="-33" r="3.500" fill="#fb4a47"/><circle cx="-30" cy="-35" r="3.500" fill="#fdb32c"/><circle cx="-21" cy="-36" r="3.500" fill="#27c23c"/><g fill="none" stroke="#333" stroke-width="4"><path d="M-23-12L-25-24Q-25-28-21-29L-15-30M6-34L15-36Q18-36 19-32L20-24M-20 5L-18 14Q-17 17-14 16L-6 15M14 9L22 8Q26 7 25 3L23-4"/></g><path d="M-13-13L-6-15L-4-20L4-21L7-17L14-18L16 2L-11 6Z" fill="#3a3a3a"/><circle cx="1" cy="-8" r="6" fill="none" stroke="#eee" stroke-width="2.500"/></svg></div>
  <div class="slot textedit"><svg viewBox="-40 -47 80 98"><path d="M-40-50L27-59L40 23L-28 34Z" fill="#fcfcfc" stroke="#ddd"/><path d="M-38-38L28-48M-37-30L30-40M-36-22L31-32M-35-14L32-24M-33-6L33-16M-32 2L34-8M-31 10L35 0M-30 18L37 8M-28 26L38 16" stroke="#bbb" stroke-width="1.300"/><path d="M-33-51L-20 32" stroke="#f3b0a8"/><path d="M31-58L37-58L39-53L15 22L9 34L10 20Z" fill="#8ea7c0" stroke="#4f5f70"/></svg></div>
  <div class="slot dict"><svg viewBox="-40 -47 80 98"><path d="M-34-36L20-46Q24-47 25-43L35 16Q35 22 31 22L-20 34Q-24 34-25 30L-35-30Z" fill="#9c3337"/><path d="M-24 25L33 14V21L-20 33Q-24 32-24 25Z" fill="#d8c7ac"/><path d="M-25-44L-33 -36L-25 30L-22 26L-30-36Z" fill="#7e2529"/><text transform="rotate(-9)" x="2" y="-31" text-anchor="middle" class="serif" font-size="10" fill="#edd">Dictionary</text><text transform="rotate(-6)" x="0" y="4" text-anchor="middle" class="serif" font-size="35" fill="#fff">Aa</text></svg></div>
  <div class="slot pages"><svg viewBox="-40 -47 80 98"><path d="M-32-28L20-36L31 26L-22 35Z" fill="#fafafa"/><path d="M-32-28L20-36L23-22L-31-14Z" fill="#f7931e"/><text transform="rotate(-9)" x="-25" y="-20" font-size="10" font-weight="700" fill="#fff" textLength="23" lengthAdjust="spacingAndGlyphs">PAGES</text><path d="M-25-8L0-12L3 6L-22 10Z" fill="#2395ea"/><path d="M-18-4L-5-6L-9 6L-11 8Z" fill="#f28b1d"/><path d="M5-13L18-15M6-8L19-10M7-3L19-5M8 2L20 0M-20 15L22 9M-19 20L22 14M-18 25L22 19M-17 30L24 24" stroke="#999"/><path d="M24-37L30-35L18 20L6 36L8 20Z" fill="#f2a024"/><path d="M9 16L17 18L12 28L6 36Z" fill="#333"/></svg></div>
  <div class="slot"><svg viewBox="-40 -47 80 98"><path d="M-33 6H33V32H-34Z" fill="#f1f1f1"/><rect x="-24" y="0" width="12" height="25" fill="#ec2b48"/><rect x="-11" y="-13" width="12" height="38" fill="#f27c1b"/><rect x="3" y="-31" width="12" height="56" fill="#22bf38"/><rect x="17" y="-20" width="12" height="45" fill="#127ff2"/></svg></div>
  <div class="slot"><svg viewBox="-40 -47 80 98"><path d="M-24-34H24L31-8H-31Z" fill="#1c9df0"/><path d="M-31-8H31V-5H-31Z" fill="#0b70bd"/><path d="M-18-30H18L21-12H-20Z" fill="#fff"/><text x="-16" y="-25" font-size="5" font-weight="700" textLength="20" lengthAdjust="spacingAndGlyphs">KEYNOTE</text><circle cx="-8" cy="-18" r="6" fill="#45b5ee"/><path d="M-8-18V-24A6 6 0 0 1-2-18Z" fill="#f4c22c"/><path d="M-8-18H-2A6 6 0 0 1-8-12Z" fill="#e24bb0"/><path d="M4-24V-14" stroke="#999" stroke-width="2" stroke-dasharray="1.500 1.500"/><path d="M0-5V30" stroke="#b5bfc8" stroke-width="5"/><ellipse cy="30" rx="14" ry="6" fill="#c5d3df" stroke="#8d9ba8"/></svg></div>
  <div class="slot"><svg viewBox="-40 -47 80 98"><circle r="35" fill="#fb3251"/><circle r="31" fill="#f5f3f4"/><path d="M-19-19H-5L19 14V19H5L-19-14ZM1-19H19V7ZM-19-6V19H-1Z" fill="#fb3251"/></svg></div>
  <div class="slot"><svg viewBox="-40 -47 80 98"><circle r="34" fill="url(#g-qt)"/><circle r="22" fill="url(#g-qti)"/><path d="M-5 3Q-4-8 2-7Q5-6 8-2L34 25V34H18L-6 12Z" fill="#33383e"/></svg></div>
  <div class="slot"><svg viewBox="-40 -47 80 98"><circle r="35" fill="url(#g-it)"/><circle r="31.500" fill="#f4f1f8"/><path d="M-7-18L15-23V11A7 6 0 1 1 10 6V-11L-3-8V15A7 6 0 1 1-8 10Z" fill="url(#g-note)"/></svg></div>
  <div class="slot"><svg viewBox="-40 -47 80 98"><circle r="34" cy="-1" fill="#e5eaef"/><circle r="31" cy="-1" fill="url(#g-as)"/><path d="M-3-21L16 14M3-21L-12 6M-20 4H5M13 4H20M-15 12L-17 15" stroke="#f6f9fc" stroke-width="5.500" stroke-linecap="round"/></svg></div>
  <div class="slot"><svg viewBox="-40 -47 80 98"><rect x="-33" y="-32" width="66" height="63" rx="3" fill="url(#g-pref)"/><circle r="28" fill="#222"/><circle r="22" fill="none" stroke="#a9a9a5" stroke-width="5"/><circle r="25" fill="none" stroke="#a9a9a5" stroke-width="3" stroke-dasharray="3 3"/><circle r="15" fill="#555"/><path d="M0 0H20M0 0L-11-18M0 0L-11 18" stroke="#b5b5b0" stroke-width="4"/><circle r="4" fill="#b5b5b0"/></svg></div>
  <div class="slot running"><svg viewBox="-40 -47 80 98"><rect x="-33" y="-29" width="66" height="58" rx="3" fill="#161616" stroke="#000" stroke-width="3"/><text class="mono" x="-26" y="-11" font-size="18" font-weight="700" fill="#fff">&gt;_</text></svg></div>
  <div class="slot running"><svg viewBox="-40 -47 80 98"><path d="M-37-18L22-32L35 22L-29 33Z" fill="#1f8af0"/><path d="M-33-15L19-27L31 19L-26 29ZM-5-22L14 20M-5-22L-20 22M-24 8L24-2" fill="none" stroke="#9ed1ff" stroke-width="1.500"/><path d="M16-27L22-26L11 33Q7 35 4 32Z" fill="#1b1b1b"/><path d="M4-33Q12-38 30-35L37-28V-21L32-26L22-27L20-6L14-6L18-28Q10-32 4-33Z" fill="#cdd3d8" stroke="#7b848c"/></svg></div>
  <div class="divider"></div>
  <div class="slot studio"><svg viewBox="-40 -47 80 98"><circle cx="-3" cy="-27" r="11" fill="#f3f3f3"/><circle r="30" fill="#7cb342"/><path d="M-27 35L-16 5H-4L-21 27ZM22 35L13 5H2L18 27Z" fill="#f0f0f0"/><path d="M-14 12Q0 26 17 0" fill="none" stroke="#f0f0f0" stroke-width="5"/><path d="M-4-17H4V-11L9-8V2L3 7H-3L-9 2V-8L-4-11Z" fill="#5b5f62"/><circle cy="-3" r="4" fill="#7cb342"/></svg></div>
  <div class="slot bin-slot"><svg viewBox="-40 -47 80 98"><path d="M-28-26H28L21 28Q20 35 0 35T-21 28Z" fill="url(#g-bin)"/><ellipse cy="-26" rx="28" ry="6" fill="#303335"/><path d="M-22-24L-20-33L-12-30L-6-37L2-30L10-36L14-29L22-31L21-23Q0-17-22-24Z" fill="#ececec"/><path d="M-10-25L-4-31L0-24Z" fill="#3fb4e0"/><path d="M8-26L14-30L13-23Z" fill="#b5502e"/></svg></div>
</div>

<div class="tooltip">
  <svg width="206" height="76" viewBox="-1 -1 206 76"><path d="M8 1H196Q203 1 203 8V47Q203 54 196 54H118Q114 54 112 58L105 69Q102 73 99 69L92 58Q90 54 86 54H8Q1 54 1 47V8Q1 1 8 1Z" fill="#626262" stroke="#111" stroke-width="2"/></svg>
  <span>Screenshot</span>
</div>
</body>
</html>
```
FILE: styles.css
```css
* { box-sizing: border-box; }
html, body { margin: 0; height: 2098px; }
body {
  position: relative;
  width: 3360px;
  overflow: hidden;
  background: #1b3a66;
  font-family: "Liberation Sans", Arial, sans-serif;
  font-size: 28px;
  color: #222;
}
svg { display: block; flex: none; }
.defs { position: absolute; }
p, h3 { margin: 0; }

.window {
  display: flex;
  flex-direction: column;
  width: 3360px;
  height: 2098px;
  border-radius: 12px 12px 0 0;
  overflow: hidden;
}

/* browser chrome */
.toolbar {
  display: flex;
  align-items: center;
  height: 76px;
  flex: none;
  padding: 0 16px 0 26px;
  border-top: 2px solid #75787b;
  border-bottom: 2px solid #4b4e51;
  background: linear-gradient(#34373b, #2c2f32);
}
.lights { display: flex; gap: 16px; margin-right: 26px; }
.lights i { width: 24px; height: 24px; border-radius: 50%; }
.red { background: #ff4e47; }
.yellow { background: #e3b61c; }
.green { background: #45ba1d; }
.btn-pair { display: flex; gap: 2px; margin-right: 20px; }
.tbtn {
  display: flex;
  align-items: center;
  justify-content: center;
  width: 74px;
  height: 44px;
  border-radius: 7px;
  background: #4b4e51;
  border-top: 1px solid #6a6d70;
}
.tbtn.back { width: 50px; }
.address {
  display: flex;
  align-items: center;
  justify-content: center;
  position: relative;
  width: 1362px;
  height: 44px;
  margin-left: 647px;
  padding: 1px 0 0 1px;
  border-radius: 7px;
  background: #646568;
  border-top: 1px solid #838487;
  font-family: Inter, "Open Sans", sans-serif;
  font-size: 24px;
  font-weight: 500;
  color: #fff;
}
.url { letter-spacing: -0.3px; }
.reload { position: absolute; right: 11px; top: 6px; }
.actions { display: flex; gap: 16px; margin-left: auto; }
.tabs {
  display: flex;
  height: 49px;
  flex: none;
  background: #1f2022;
  font-family: Inter, "Open Sans", sans-serif;
  font-size: 22px;
  letter-spacing: -0.22px;
  color: #8b8c8e;
}
.tab {
  width: 474px;
  padding-left: 46px;
  line-height: 48px;
  border-right: 2px solid #3b3d40;
  white-space: nowrap;
  overflow: hidden;
}
.tab:nth-child(n+5) { width: 472px; }
.tab.loose { letter-spacing: 0.03px; }
.tab.tight { letter-spacing: -0.3px; }
.tab.current {
  padding: 0;
  text-align: center;
  color: #fff;
  font-weight: 600;
  background: #2b2e31;
}
.newtab { flex: 1; display: flex; align-items: center; justify-content: center; }

/* editor header */
.header {
  display: flex;
  align-items: center;
  height: 81px;
  flex: none;
  padding: 0 41px 0 39px;
  background: #000;
}
.logo { margin-top: 13px; }
.brand { margin: 14px 0 0 15px; font-size: 32px; line-height: 40px; color: #c7c7c7; }
.deploy {
  display: flex;
  align-items: center;
  width: 245px;
  height: 60px;
  margin-left: auto;
  padding: 2px 16px 0;
  background: #333;
}
.deploy-label { margin: 0 auto 0 24px; color: #8b8b8b; }
.burger { display: flex; flex-direction: column; gap: 5.500px; margin-left: 78px; }
.burger i { width: 35px; height: 6px; border-radius: 1px; background: #c7c7c7; }

.main { display: flex; flex: 1; min-height: 0; border-top: 2px solid #bbb; border-left: 2px solid #bbb; border-right: 2px solid #bbb; background: #fff; }

/* palette */
.palette { width: 358px; flex: none; border-right: 2px solid #bbb; overflow: hidden; }
.search {
  display: flex;
  align-items: center;
  gap: 7px;
  height: 70px;
  padding: 4px 0 0 22px;
  border-bottom: 2px solid #bbb;
  color: #b2b2b2;
}
.category { border-bottom: 2px solid #c5c5c5; }
.category h3 {
  display: flex;
  align-items: center;
  gap: 20px;
  height: 75px;
  padding: 3px 0 0 22px;
  background: #f1f1f1;
  font-size: 28px;
}
.nodes { display: flex; flex-direction: column; gap: 20px; padding: 27px 0 26px 56px; }
.node {
  position: relative;
  display: flex;
  width: 244px;
  height: 60px;
  border: 2px solid #919191;
  border-radius: 10px;
  line-height: 54px;
  font-size: 26.700px;
  text-align: center;
}
.node span { flex: 1; display: flex; justify-content: center; padding-left: 2px; white-space: nowrap; }
.node.right span { padding: 0 2px 0 0; }
.node .icon {
  width: 62px;
  height: 56px;
  flex: none;
  padding: 1px 0;
  background: rgba(0, 0, 0, .05);
  border-right: 2px solid rgba(0, 0, 0, .12);
  border-radius: 8px 0 0 8px;
}
.node.right .icon { order: 2; border-right: 0; border-left: 2px solid rgba(0, 0, 0, .12); border-radius: 0 8px 8px 0; }
.node .glyph { color: #fff; font: bold 48px/50px "Liberation Sans", Arial, sans-serif; }
.node .fn { font: bold 46px/48px "Liberation Sans", Arial, sans-serif; }
.port {
  position: absolute;
  top: 18px;
  width: 20px;
  height: 20px;
  border: 2px solid #919191;
  border-radius: 6px;
  background: #d5d5d5;
}
.port.out { right: -12px; }
.port.in { left: -10px; }
.inject { background: #9fb3cb; }
.catch { background: #e08585; }
.status { background: #b8ecb8; }
.link { background: #d9d9d9; }
.mqtt { background: #d2b7d3; }
.http { background: #e4e4a5; }
.websocket { background: #d2d295; }
.net { background: #b9b9b9; }
.debug { background: #7da176; }
.func { background: #fcca98; }
.template { background: #f0ac5a; }

/* workspace */
.workspace { width: 2356px; flex: none; border-right: 2px solid #bbb; }
.flow-tabs { display: flex; align-items: flex-end; height: 70px; padding: 0 6px 0 48px; box-shadow: inset 0 -2px #bbb; }
.ftab {
  display: flex;
  align-items: center;
  width: 400px;
  height: 62px;
  margin-right: 12px;
  padding: 0 0 2px 24px;
  border: 2px solid #bbb;
  border-bottom: 0;
  background: #ededed;
  color: #666;
}
.ftab.active { height: 64px; background: #fff; color: #222; font-weight: bold; padding-bottom: 0; }
.fbtn {
  display: flex;
  align-items: center;
  justify-content: center;
  width: 64px;
  height: 64px;
  margin-left: 12px;
  padding-top: 2px;
  border: 2px solid #bbb;
}
.fbtn.first { margin-left: auto; }
.canvas {
  background-image: linear-gradient(90deg, #ebebeb 2px, transparent 2px), linear-gradient(#ebebeb 2px, transparent 2px);
  background-size: 40px 40px;
  background-position: -1px -1px;
}
.wires path { stroke: #808080; stroke-width: 6; }
.wires .halo { stroke: #fff; stroke-width: 10; }
.flow-node rect { stroke: #919191; stroke-width: 2; }
.tray { fill: #ececec; }
.blue { fill: #9fb3cb; }
.yellow { fill: #e0d560; }
.green { fill: #7da176; }
.plug { fill: #d9d9d9; }
.shade { fill: #000; fill-opacity: .06; }
.rule { stroke: #000; stroke-opacity: .12; stroke-width: 1.500; }
.canvas text { font-size: 28px; fill: #222; }
.canvas .it { font-style: italic; }

.separator { display: flex; align-items: center; justify-content: center; width: 14px; flex: none; padding-bottom: 10px; background: #f1f1f1; }
.separator i { width: 7px; height: 100px; border: solid #dcdcdc; border-width: 0 1px; background: #c8c8c8; }

/* sidebar */
.sidebar { display: flex; flex-direction: column; flex: 1; border-left: 2px solid #bbb; }
.side-tabs { display: flex; align-items: flex-end; height: 70px; flex: none; padding-left: 6px; box-shadow: inset 0 -2px #bbb; }
.side-tabs .ftab.active { margin-right: 22px; gap: 8px; }
.side-tabs .ftab svg, .sbtn, .tool { color: #757575; }
.sbtn {
  display: flex;
  align-items: center;
  justify-content: center;
  width: 56px;
  height: 56px;
  margin: 0 12px 6px 0;
  border: 2px solid #c8c8c8;
}
.sbtn.grey { background: #ebebeb; color: #888; }
.sbtn.selected { border-bottom: 4px solid #a0a0a0; padding-top: 1px; }
.sbtn.drop { width: 52px; height: 52px; margin: 0 0 8px 2px; border: 0; background: #ebebeb; }
.side-tools {
  display: flex;
  align-items: flex-start;
  justify-content: flex-end;
  gap: 20px;
  height: 84px;
  flex: none;
  padding: 16px 40px 0 0;
  border-bottom: 2px solid #d9d9d9;
  background: #f1f1f1;
}
.tool {
  display: flex;
  align-items: center;
  gap: 7px;
  width: 169px;
  height: 50px;
  padding: 0 0 0 16px;
  border: 2px solid #c8c8c8;
  background: #fff;
  font-size: 26px;
  white-space: nowrap;
}
.tool.bin { width: 56px; padding-left: 13px; }
.log { flex: 1; margin-top: 2px; border: solid #ececec; border-width: 0 16px; }
.msg { height: 142px; padding: 13px 4px 0; border-bottom: 2px solid #ebebeb; }
.meta { display: flex; gap: 20px; padding-left: 2px; font-size: 22px; line-height: 24px; letter-spacing: .08px; color: #666; }
.topic { margin-top: 16px; font-size: 22px; line-height: 24px; letter-spacing: .1px; color: #a35558; }
.value { margin-top: 19px; padding-left: 8px; font: 26px/30px "DejaVu Sans Mono", monospace; color: #1a1ad6; }

/* dock */
.dock-shadow {
  position: absolute;
  left: 0; right: 0; bottom: 0;
  height: 220px;
  background: linear-gradient(transparent, rgba(0, 0, 0, .08) 55%, rgba(0, 0, 0, .12));
}
.dock {
  position: absolute;
  left: 8px;
  top: 1999px;
  width: 3346px;
  height: 99px;
  display: flex;
  padding-left: 6px;
  border: 1px solid #666;
  border-bottom: 0;
  border-radius: 10px 10px 0 0;
  background: linear-gradient(90deg, #b7afa8, #b9aca3 10%, #b5b5b5 20%);
  box-shadow: inset 0 2px #c6c6c6;
}
.slot { display: flex; flex-direction: column; align-items: center; width: 81.750px; flex: none; position: relative; }
.slot svg { width: 80px; height: 98px; overflow: visible; }
.running::after { content: ""; position: absolute; bottom: 2px; width: 8px; height: 8px; border-radius: 50%; background: #fff; }
.slot.kindle { width: 102px; }
.slot.evernote { width: 98px; }
.slot.shot { width: 122px; }
.slot.textedit { width: 96px; }
.slot.dict { width: 100px; }
.slot.pages { width: 80px; }
.slot.studio { width: 78px; }
.slot.bin-slot { width: 86px; }
.divider { width: 2px; height: 72px; margin: 14px 18px 0; background: #ddd; flex: none; }
.slot text { font-family: "Liberation Sans", Arial, sans-serif; }
.slot text.serif { font-family: "Liberation Serif", serif; }
.slot text.mono { font-family: "DejaVu Sans Mono", monospace; }

.tooltip { position: absolute; left: 1969px; top: 1895px; width: 206px; height: 76px; }
.tooltip span {
  position: absolute;
  left: 0; right: 0; top: 0;
  text-align: center;
  font: 28px/56px Inter, "Open Sans", sans-serif;
  letter-spacing: -0.15px;
  color: #fff;
}
```
